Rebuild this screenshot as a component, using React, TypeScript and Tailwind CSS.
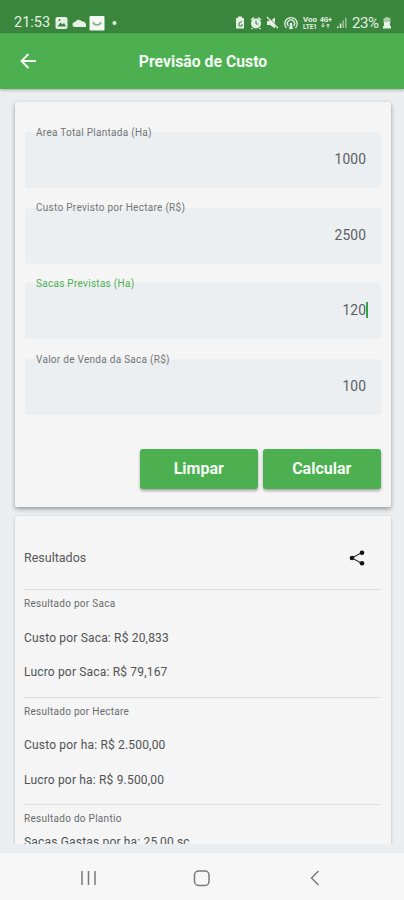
import React from "react";

type FieldProps = { label: string; value: string; active?: boolean };

function Field({ label, value, active }: FieldProps) {
  return (
    <div className="relative mb-[19.7px] flex h-14 items-center justify-end rounded-[3px] bg-[#ebeff2] pr-[14.5px]">
      <span
        className={`absolute left-[11.5px] top-[-6.5px] whitespace-nowrap text-[10px] leading-[14px] tracking-[0.28px] ${active ? "text-[#4caf50]" : "text-[#737577]"}`}
      >
        {label}
      </span>
      <span className="mt-[-2px] text-[13.8px] leading-4 tracking-[0.1px] text-[#5b5d5f]">{value}</span>
      {active && <span className="-mr-0.5 mt-[-2px] h-4 w-0.5 bg-[#35a642]" />}
    </div>
  );
}

function Button({ children }: { children: string }) {
  return (
    <button className="h-[39.5px] w-[117.5px] rounded-[3px] bg-[#4caf50] text-[16px] font-bold leading-none text-[#f4fbf4] shadow-[0_2px_3px_rgba(0,0,0,0.32)]">
      {children}
    </button>
  );
}

type GroupProps = { title: string; lines: string[]; compact?: boolean };

function Group({ title, lines, compact }: GroupProps) {
  return (
    <section className="h-[107.5px] border-t border-[#dcdddd] pt-[7px]">
      <h3 className="text-[10px] leading-[14px] tracking-[0.28px] text-[#696b6c]">{title}</h3>
      <div className={compact ? "-mt-px" : "mt-[9.5px]"}>
        {lines.map((line) => (
          <p key={line} className="h-[34.5px] whitespace-nowrap text-[12px] leading-[34px] tracking-[0.18px] text-[#505254]">
            {line}
          </p>
        ))}
      </div>
    </section>
  );
}

function StatusBar() {
  return (
    <div className="flex h-[33px] items-start bg-[#3a863d] pl-[14px] pt-[14px] text-[#e4f1e4]">
      <span className="w-[41px] text-[14.5px] leading-[18px]">21:53</span>
      <svg className="h-[18px] w-[65px]" viewBox="55 14 65 18" fill="currentColor">
        <rect x="55.5" y="17" width="12" height="12" rx="2" />
        <path d="M57.5 26.5l3-4 2 2 1.500-1.500 2 3.500z" fill="#3a863d" />
        <circle cx="59.500" cy="20" r="1" fill="#3a863d" />
        <path d="M75 27a2.500 2.500 0 0 1 0-5 4 4 0 0 1 7-.500c3 0 4.500 2 4 5.500z" />
        <rect x="89.500" y="16" width="15" height="14.500" rx="1" fill="#f3f8f2" />
        <path d="M93 22c1 4 7 4 8 0" fill="none" stroke="#83b184" strokeWidth="1.500" />
        <circle cx="114.500" cy="23" r="2" />
      </svg>
      <svg className="ml-[114px] h-[18px] w-[114px]" viewBox="234 14 114 18" fill="currentColor">
        <path d="M238 16.500h4v1.500h2v10.500h-8V18h2z" />
        <path d="M242 21.500l-3 1.500v3h3v-2" fill="none" stroke="#3a863d" strokeWidth="1" />
        <circle cx="256" cy="23.500" r="5" />
        <path d="M251 20l3-2.500M261 20l-3-2.500M252.500 28l-1 1M259.500 28l1 1" stroke="currentColor" strokeWidth="1.500" />
        <path d="M256 20.500v3.500h2.500" fill="none" stroke="#3a863d" />
        <path d="M267 21h3l5-3.500v11l-5-3.500h-3z" />
        <path d="M267 17l11 11" stroke="currentColor" strokeWidth="1.500" />
        <path d="M267.500 16l11 11" stroke="#3a863d" strokeWidth=".8" />
        <path d="M286.500 28a6.200 6.200 0 1 1 9 0M288.500 26a3.500 3.500 0 1 1 5 0" fill="none" stroke="currentColor" strokeWidth="1.300" />
        <circle cx="291" cy="24" r="1.300" />
        <path d="M290 25h2l1 4h-4z" />
        <text x="303" y="22" fontSize="6.500" fontWeight="700" textLength="14" lengthAdjust="spacingAndGlyphs">Voo</text>
        <text x="303" y="28.500" fontSize="7" fontWeight="700" textLength="14" lengthAdjust="spacingAndGlyphs">LTE1</text>
        <text x="320" y="22" fontSize="6.500" fontWeight="700" textLength="12" lengthAdjust="spacingAndGlyphs">4G+</text>
        <path d="M323 23v4l-1.500-1.500M323 27l1.500-1.500M328 28v-4l-1.500 1.500M328 24l1.500 1.500" fill="none" stroke="currentColor" />
        <path d="M337 26.500h1.600V28H337zM339.800 23.500h1.600V28h-1.600z" />
        <path d="M342.500 20.500h1.500V28h-1.500zM345 17.500h1.500V28H345z" opacity=".55" />
      </svg>
      <span className="ml-1 w-[30px] whitespace-nowrap text-[15px] leading-[18px] tracking-[-0.4px]">23%</span>
      <svg className="h-[18px] w-[10px]" viewBox="382 14 10 18" fill="currentColor">
        <path d="M385.500 17h3v1h2v5h-7v-5h2z" opacity=".65" />
        <path d="M384 22h6v4h1v2.500h-8V26h1z" />
      </svg>
    </div>
  );
}

export default function App() {
  return (
    <main className="flex h-[900px] w-[404px] flex-col overflow-hidden bg-[#eaeef1] font-[Roboto,sans-serif]">
      <StatusBar />
      <header className="z-10 flex h-14 shrink-0 items-center bg-[#4caf50] pl-[20px] text-[#f4fbf4] shadow-[0_1px_3px_rgba(0,0,0,0.3)]">
        <svg className="h-4 w-4" viewBox="0 0 16 16" fill="none" stroke="currentColor" strokeWidth="2">
          <path d="M16 8H2M8.500 1L1.500 8l7 7" />
        </svg>
        <h1 className="ml-[13px] w-[308px] pt-px text-center text-[15.8px] font-bold leading-5">Previsão de Custo</h1>
      </header>
      <div className="h-[755px] shrink-0 overflow-hidden px-[14.5px] pt-[13px]">
        <div className="h-[405px] w-[376px] rounded-[2px] bg-[#f5f5f5] px-[10px] pt-[30px] shadow-[0_2px_4px_rgba(0,0,0,0.36)]">
          <Field label="Area Total Plantada (Ha)" value="1000" />
          <Field label="Custo Previsto por Hectare (R$)" value="2500" />
          <Field label="Sacas Previstas (Ha)" value="120" active />
          <Field label="Valor de Venda da Saca (R$)" value="100" />
          <div className="mt-[34px] flex justify-end gap-[5.5px]">
            <Button>Limpar</Button>
            <Button>Calcular</Button>
          </div>
        </div>
        <div className="mt-[9px] h-[400px] w-[376px] rounded-[2px] bg-[#f5f5f5] pl-[9.5px] pr-[10px] shadow-[0_1px_3px_rgba(0,0,0,0.25)]">
          <div className="flex h-[73px] items-center justify-between pr-[16px] pt-[11px]">
            <h2 className="text-[12.5px] leading-4 text-[#57595b]">Resultados</h2>
            <svg className="h-4 w-4" viewBox="0 0 16 16" fill="#111">
              <path d="M13 2.500L3 8l10 5.500" fill="none" stroke="#333" strokeWidth="1.200" />
              <circle cx="13" cy="2.700" r="2.300" />
              <circle cx="3" cy="8" r="2.300" />
              <circle cx="13" cy="13.300" r="2.300" />
            </svg>
          </div>
          <Group title="Resultado por Saca" lines={["Custo por Saca: R$ 20,833", "Lucro por Saca: R$ 79,167"]} />
          <Group title="Resultado por Hectare" lines={["Custo por ha: R$ 2.500,00", "Lucro por ha: R$ 9.500,00"]} />
          <Group title="Resultado do Plantio" lines={["Sacas Gastas por ha: 25,00 sc"]} compact />
        </div>
      </div>
      <div className="h-[9px] shrink-0 bg-[#eaeef0]" />
      <nav className="h-[47px] shrink-0 bg-[#f7f7f7]">
        <svg className="h-[47px] w-[404px]" viewBox="0 853 404 47" fill="none" stroke="#77797b" strokeWidth="1.500">
          <path d="M82 871v14M88.500 871v14M95 871v14" />
          <rect x="194.500" y="871" width="14.500" height="14.500" rx="4" />
          <path d="M318.500 871l-7 7 7 7" />
        </svg>
      </nav>
    </main>
  );
}
